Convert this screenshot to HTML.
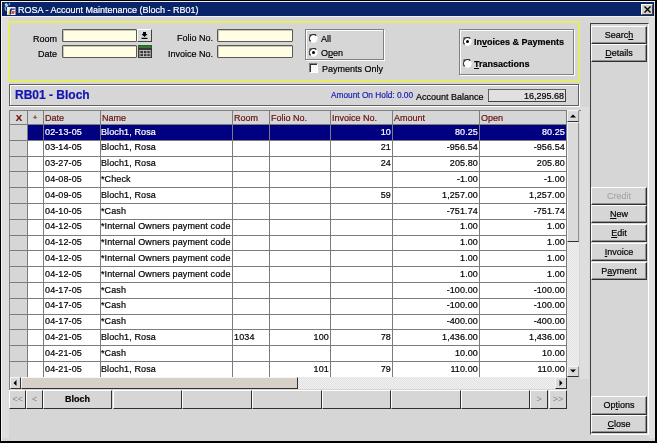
<!DOCTYPE html>
<html><head><meta charset="utf-8">
<style>
*{box-sizing:border-box;margin:0;padding:0}
html,body{width:657px;height:443px;overflow:hidden;background:#d6d6d6}
body{position:relative;font-family:"Liberation Sans",sans-serif;font-size:9px;color:#000}
u{text-decoration:underline;text-underline-offset:1px}
</style></head><body>
<div style="position:absolute;left:0;top:0;width:657px;height:443px;background:#d6d6d6;border:1px solid #000;border-right-width:2px;border-bottom-width:2px"></div>
<div style="position:absolute;left:1px;top:1px;width:654px;height:440px;border-top:1px solid #f4f4f4;border-left:1px solid #f4f4f4"></div>
<div style="position:absolute;left:2px;top:17px;width:6.7px;height:421px;background:#dedede"></div>
<div style="position:absolute;left:580.4px;top:107px;width:8.6px;height:272px;background:#dedede"></div>
<div style="position:absolute;left:649px;top:17px;width:5.5px;height:421px;background:#e0e0e0"></div>
<div style="position:absolute;left:2px;top:2px;width:652px;height:13.5px;background:#0a246a"></div>
<div style="position:absolute;left:1px;top:15.5px;width:654px;height:1px;background:#f0f0f0"></div>
<svg style="position:absolute;left:2px;top:2px" width="15" height="14" viewBox="0 0 15 14">
<path d="M2.5 2 L4.5 1 L6.5 3.5 L4 5.5Z" fill="#a8d0f0"/><circle cx="7.5" cy="2" r="0.9" fill="#80a8e8"/><path d="M2.5 5 L3.5 4.5 L4.5 9 L3 8.5Z" fill="#98c098"/>
<rect x="5" y="5" width="8.5" height="8" fill="#f0f0f0"/>
<path d="M5.5 12.5 L8 7.5 L9.5 8 L7 13Z" fill="#e8e040"/>
<path d="M8 7 L10 6 L9 12.5 L7.5 12.5Z" fill="#182868"/>
<path d="M10 6.5 L13 6.5 L12.5 8 L9.8 8Z" fill="#3048b0"/><path d="M10 9 L13 9 L12 12 L9.5 12Z" fill="#e04858"/>
</svg>
<div style="position:absolute;left:18px;top:4.6px;font-size:9px;line-height:10px;white-space:nowrap;will-change:transform;-webkit-text-stroke:0.2px currentColor;color:#fff">ROSA - Account Maintenance (Bloch - RB01)</div>
<div style="position:absolute;left:640.5px;top:4px;width:12px;height:10.5px;background:#d4d0c8;border-top:1px solid #fff;border-left:1px solid #fff;border-right:1px solid #404040;border-bottom:1px solid #404040"></div>
<svg style="position:absolute;left:643.5px;top:5.5px" width="7" height="7" viewBox="0 0 7 7"><path d="M0.5 0.5 L6.5 6.5 M6.5 0.5 L0.5 6.5" stroke="#000" stroke-width="1.4"/></svg>
<div style="position:absolute;left:8px;top:20.5px;width:572px;height:61.5px;border:2.5px solid #e8ec64"></div>
<div style="position:absolute;left:-63px;width:120px;text-align:right;top:33.5px;font-size:9px;line-height:10px;white-space:nowrap;will-change:transform;-webkit-text-stroke:0.2px currentColor;">Room</div>
<div style="position:absolute;left:-63px;width:120px;text-align:right;top:49.3px;font-size:9px;line-height:10px;white-space:nowrap;will-change:transform;-webkit-text-stroke:0.2px currentColor;">Date</div>
<div style="position:absolute;left:61.7px;top:29px;width:75.5px;height:13.2px;background:#fffde2;border:1px solid #585858;border-radius:1px;box-shadow:inset 1px 1px 0 #c8c8b0"></div>
<div style="position:absolute;left:61.7px;top:45px;width:75.5px;height:13.2px;background:#fffde2;border:1px solid #585858;border-radius:1px;box-shadow:inset 1px 1px 0 #c8c8b0"></div>
<div style="position:absolute;left:137px;top:29px;width:15px;height:13px;background:#dadada;border-top:1px solid #fff;border-left:1px solid #fff;border-right:1px solid #404040;border-bottom:1px solid #404040"></div>
<svg style="position:absolute;left:141px;top:32px" width="7" height="7" viewBox="0 0 7 7"><path d="M2 0 H5 V2 H6.5 L3.5 5 L0.5 2 H2Z" fill="#000"/><rect x="0.5" y="5.8" width="6" height="1.2" fill="#000"/></svg>
<svg style="position:absolute;left:138px;top:45px" width="14" height="13" viewBox="0 0 14 13">
<rect x="0" y="0" width="14" height="13" fill="#383838"/><rect x="0.5" y="0.5" width="13" height="2.5" fill="#2f7a2f"/>
<g fill="#d0d0d0"><rect x="1.5" y="5" width="11" height="0.8"/><rect x="1.5" y="8.3" width="11" height="0.8"/><rect x="1.5" y="11.2" width="11" height="0.8"/>
<rect x="1.5" y="5" width="0.8" height="7"/><rect x="5" y="5" width="0.8" height="7"/><rect x="8.5" y="5" width="0.8" height="7"/><rect x="11.7" y="5" width="0.8" height="7"/></g>
</svg>
<div style="position:absolute;left:93px;width:120px;text-align:right;top:33.4px;font-size:9px;line-height:10px;white-space:nowrap;will-change:transform;-webkit-text-stroke:0.2px currentColor;">Folio No.</div>
<div style="position:absolute;left:93px;width:120px;text-align:right;top:49.4px;font-size:9px;line-height:10px;white-space:nowrap;will-change:transform;-webkit-text-stroke:0.2px currentColor;">Invoice No.</div>
<div style="position:absolute;left:217.1px;top:29px;width:75.5px;height:13.2px;background:#fffde2;border:1px solid #585858;border-radius:1px;box-shadow:inset 1px 1px 0 #c8c8b0"></div>
<div style="position:absolute;left:217.1px;top:45px;width:75.5px;height:13.2px;background:#fffde2;border:1px solid #585858;border-radius:1px;box-shadow:inset 1px 1px 0 #c8c8b0"></div>
<div style="position:absolute;left:304.7px;top:28.6px;width:79.5px;height:31.5px;border:1px solid #808080;box-shadow:1px 1px 0 #fff, inset 1px 1px 0 #fff"></div>
<svg style="position:absolute;left:308.8px;top:33.6px" width="9" height="9" viewBox="0 0 12 12">
<circle cx="6" cy="6" r="5.5" fill="#fff"/>
<path d="M1.2 9.5 A5.5 5.5 0 0 1 9.5 1.2" stroke="#707070" stroke-width="1.4" fill="none"/>
<path d="M2.3 9.7 A4.4 4.4 0 0 1 9.7 2.3" stroke="#202020" stroke-width="1.4" fill="none"/>
</svg>
<div style="position:absolute;left:321.1px;top:34.4px;font-size:9px;line-height:10px;white-space:nowrap;will-change:transform;-webkit-text-stroke:0.2px currentColor;">All</div>
<svg style="position:absolute;left:308.8px;top:47.7px" width="9" height="9" viewBox="0 0 12 12">
<circle cx="6" cy="6" r="5.5" fill="#fff"/>
<path d="M1.2 9.5 A5.5 5.5 0 0 1 9.5 1.2" stroke="#707070" stroke-width="1.4" fill="none"/>
<path d="M2.3 9.7 A4.4 4.4 0 0 1 9.7 2.3" stroke="#202020" stroke-width="1.4" fill="none"/>
<circle cx="6" cy="6" r="2" fill="#000"/></svg>
<div style="position:absolute;left:321.1px;top:47.9px;font-size:9px;line-height:10px;white-space:nowrap;will-change:transform;-webkit-text-stroke:0.2px currentColor;">O<u>p</u>en</div>
<div style="position:absolute;left:308.8px;top:63px;width:9.5px;height:9.5px;background:#f8f8f8;border-top:1px solid #808080;border-left:1px solid #808080;border-right:1px solid #fff;border-bottom:1px solid #fff;box-shadow:inset 1px 1px 0 #303030"></div>
<div style="position:absolute;left:322px;top:64.3px;font-size:9px;line-height:10px;white-space:nowrap;will-change:transform;-webkit-text-stroke:0.2px currentColor;">Payments Only</div>
<div style="position:absolute;left:459.1px;top:28.8px;width:114.5px;height:46.3px;border:1px solid #808080;box-shadow:1px 1px 0 #fff, inset 1px 1px 0 #fff"></div>
<svg style="position:absolute;left:463px;top:37px" width="9" height="9" viewBox="0 0 12 12">
<circle cx="6" cy="6" r="5.5" fill="#fff"/>
<path d="M1.2 9.5 A5.5 5.5 0 0 1 9.5 1.2" stroke="#707070" stroke-width="1.4" fill="none"/>
<path d="M2.3 9.7 A4.4 4.4 0 0 1 9.7 2.3" stroke="#202020" stroke-width="1.4" fill="none"/>
<circle cx="6" cy="6" r="2" fill="#000"/></svg>
<div style="position:absolute;left:474.4px;top:37.3px;font-size:9px;line-height:10px;white-space:nowrap;will-change:transform;-webkit-text-stroke:0.2px currentColor;font-weight:bold">In<u>v</u>oices &amp; Payments</div>
<svg style="position:absolute;left:463px;top:58.8px" width="9" height="9" viewBox="0 0 12 12">
<circle cx="6" cy="6" r="5.5" fill="#fff"/>
<path d="M1.2 9.5 A5.5 5.5 0 0 1 9.5 1.2" stroke="#707070" stroke-width="1.4" fill="none"/>
<path d="M2.3 9.7 A4.4 4.4 0 0 1 9.7 2.3" stroke="#202020" stroke-width="1.4" fill="none"/>
</svg>
<div style="position:absolute;left:474.4px;top:58.8px;font-size:9px;line-height:10px;white-space:nowrap;will-change:transform;-webkit-text-stroke:0.2px currentColor;font-weight:bold"><u>T</u>ransactions</div>
<div style="position:absolute;left:590px;top:23px;width:58.6px;height:412px;border-top:1px solid #404040;border-left:1px solid #404040;border-right:1px solid #fff;border-bottom:1px solid #fff"></div>
<div style="position:absolute;left:591.3px;top:25.7px;width:55.5px;height:18.6px;background:#d6d6d6;border-top:1px solid #fff;border-left:1px solid #fff;border-right:1px solid #303030;border-bottom:1px solid #303030;box-shadow:inset -1px -1px 0 #909090"></div>
<div style="position:absolute;left:579.05px;width:80px;text-align:center;top:30px;font-size:9px;line-height:10px;white-space:nowrap;will-change:transform;-webkit-text-stroke:0.2px currentColor;">Searc<u>h</u></div>
<div style="position:absolute;left:591.3px;top:43.9px;width:55.5px;height:18.6px;background:#d6d6d6;border-top:1px solid #fff;border-left:1px solid #fff;border-right:1px solid #303030;border-bottom:1px solid #303030;box-shadow:inset -1px -1px 0 #909090"></div>
<div style="position:absolute;left:579.05px;width:80px;text-align:center;top:48px;font-size:9px;line-height:10px;white-space:nowrap;will-change:transform;-webkit-text-stroke:0.2px currentColor;"><u>D</u>etails</div>
<div style="position:absolute;left:591.3px;top:186.7px;width:55.5px;height:18.6px;background:#d6d6d6;border-top:1px solid #fff;border-left:1px solid #fff;border-right:1px solid #303030;border-bottom:1px solid #303030;box-shadow:inset -1px -1px 0 #909090"></div>
<div style="position:absolute;left:579.05px;width:80px;text-align:center;top:191px;font-size:9px;line-height:10px;white-space:nowrap;will-change:transform;-webkit-text-stroke:0.2px currentColor;color:#a8a8a8">Credit</div>
<div style="position:absolute;left:591.3px;top:204.9px;width:55.5px;height:18.6px;background:#d6d6d6;border-top:1px solid #fff;border-left:1px solid #fff;border-right:1px solid #303030;border-bottom:1px solid #303030;box-shadow:inset -1px -1px 0 #909090"></div>
<div style="position:absolute;left:579.05px;width:80px;text-align:center;top:209px;font-size:9px;line-height:10px;white-space:nowrap;will-change:transform;-webkit-text-stroke:0.2px currentColor;"><u>N</u>ew</div>
<div style="position:absolute;left:591.3px;top:223.8px;width:55.5px;height:18.6px;background:#d6d6d6;border-top:1px solid #fff;border-left:1px solid #fff;border-right:1px solid #303030;border-bottom:1px solid #303030;box-shadow:inset -1px -1px 0 #909090"></div>
<div style="position:absolute;left:579.05px;width:80px;text-align:center;top:228px;font-size:9px;line-height:10px;white-space:nowrap;will-change:transform;-webkit-text-stroke:0.2px currentColor;"><u>E</u>dit</div>
<div style="position:absolute;left:591.3px;top:242.5px;width:55.5px;height:18.6px;background:#d6d6d6;border-top:1px solid #fff;border-left:1px solid #fff;border-right:1px solid #303030;border-bottom:1px solid #303030;box-shadow:inset -1px -1px 0 #909090"></div>
<div style="position:absolute;left:579.05px;width:80px;text-align:center;top:247px;font-size:9px;line-height:10px;white-space:nowrap;will-change:transform;-webkit-text-stroke:0.2px currentColor;"><u>I</u>nvoice</div>
<div style="position:absolute;left:591.3px;top:261.5px;width:55.5px;height:18.6px;background:#d6d6d6;border-top:1px solid #fff;border-left:1px solid #fff;border-right:1px solid #303030;border-bottom:1px solid #303030;box-shadow:inset -1px -1px 0 #909090"></div>
<div style="position:absolute;left:579.05px;width:80px;text-align:center;top:266px;font-size:9px;line-height:10px;white-space:nowrap;will-change:transform;-webkit-text-stroke:0.2px currentColor;">P<u>a</u>yment</div>
<div style="position:absolute;left:591.3px;top:396px;width:55.5px;height:18.6px;background:#d6d6d6;border-top:1px solid #fff;border-left:1px solid #fff;border-right:1px solid #303030;border-bottom:1px solid #303030;box-shadow:inset -1px -1px 0 #909090"></div>
<div style="position:absolute;left:579.05px;width:80px;text-align:center;top:400px;font-size:9px;line-height:10px;white-space:nowrap;will-change:transform;-webkit-text-stroke:0.2px currentColor;">Op<u>t</u>ions</div>
<div style="position:absolute;left:591.3px;top:414.8px;width:55.5px;height:18.6px;background:#d6d6d6;border-top:1px solid #fff;border-left:1px solid #fff;border-right:1px solid #303030;border-bottom:1px solid #303030;box-shadow:inset -1px -1px 0 #909090"></div>
<div style="position:absolute;left:579.05px;width:80px;text-align:center;top:419px;font-size:9px;line-height:10px;white-space:nowrap;will-change:transform;-webkit-text-stroke:0.2px currentColor;"><u>C</u>lose</div>
<div style="position:absolute;left:9px;top:84.2px;width:569.5px;height:21.8px;border:1px solid #606060;box-shadow:1px 1px 0 #fff, inset 1px 1px 0 #fff"></div>
<div style="position:absolute;left:14.8px;top:89.8px;font-size:12px;line-height:10px;white-space:nowrap;will-change:transform;-webkit-text-stroke:0.2px currentColor;font-weight:bold;color:#1414b4">RB01 - Bloch</div>
<div style="position:absolute;left:331px;top:90px;font-size:8px;line-height:10px;white-space:nowrap;will-change:transform;-webkit-text-stroke:0.2px currentColor;color:#2020b4;font-size:8.3px">Amount On Hold: 0.00</div>
<div style="position:absolute;left:416.3px;top:91.5px;font-size:9px;line-height:10px;white-space:nowrap;will-change:transform;-webkit-text-stroke:0.2px currentColor;">Account Balance</div>
<div style="position:absolute;left:488px;top:89px;width:78px;height:13px;background:#e0e0e0;border:1px solid #404040;border-top-color:#606060;border-left-color:#606060"></div>
<div style="position:absolute;left:444px;width:120px;text-align:right;top:90.5px;font-size:9px;line-height:10px;white-space:nowrap;will-change:transform;-webkit-text-stroke:0.2px currentColor;">16,295.68</div>
<div style="position:absolute;left:8.7px;top:109.9px;width:572px;height:280.5px;border-top:1px solid #808080;border-left:1px solid #808080"></div>
<div style="position:absolute;left:9.7px;top:110.4px;width:556.8px;height:266.9px;background:#fff"></div>
<div style="position:absolute;left:9.7px;top:110.4px;width:556.8px;height:14.099999999999994px;background:#d6d6d6"></div>
<div style="position:absolute;left:9.7px;top:124.5px;width:17.6px;height:252.8px;background:#d6d6d6"></div>
<div style="position:absolute;left:27.3px;top:124.5px;width:539.2px;height:15.8px;background:#000080"></div>
<div style="position:absolute;left:8.5px;width:20px;text-align:center;top:113.4px;font-size:9px;line-height:10px;white-space:nowrap;will-change:transform;-webkit-text-stroke:0.2px currentColor;color:#681010;font-weight:bold;font-size:9.5px;line-height:10px">X</div>
<div style="position:absolute;left:27.299999999999997px;width:16px;text-align:center;top:113.4px;font-size:9px;line-height:10px;white-space:nowrap;will-change:transform;-webkit-text-stroke:0.2px currentColor;color:#681010;font-size:8px">+</div>
<div style="position:absolute;left:44.8px;top:113.4px;font-size:9px;line-height:10px;white-space:nowrap;will-change:transform;-webkit-text-stroke:0.2px currentColor;color:#681010">Date</div>
<div style="position:absolute;left:101.5px;top:113.4px;font-size:9px;line-height:10px;white-space:nowrap;will-change:transform;-webkit-text-stroke:0.2px currentColor;color:#681010">Name</div>
<div style="position:absolute;left:233.8px;top:113.4px;font-size:9px;line-height:10px;white-space:nowrap;will-change:transform;-webkit-text-stroke:0.2px currentColor;color:#681010">Room</div>
<div style="position:absolute;left:270.9px;top:113.4px;font-size:9px;line-height:10px;white-space:nowrap;will-change:transform;-webkit-text-stroke:0.2px currentColor;color:#681010">Folio No.</div>
<div style="position:absolute;left:332.4px;top:113.4px;font-size:9px;line-height:10px;white-space:nowrap;will-change:transform;-webkit-text-stroke:0.2px currentColor;color:#681010">Invoice No.</div>
<div style="position:absolute;left:393.7px;top:113.4px;font-size:9px;line-height:10px;white-space:nowrap;will-change:transform;-webkit-text-stroke:0.2px currentColor;color:#681010">Amount</div>
<div style="position:absolute;left:481.0px;top:113.4px;font-size:9px;line-height:10px;white-space:nowrap;will-change:transform;-webkit-text-stroke:0.2px currentColor;color:#681010">Open</div>
<div style="position:absolute;left:44.5px;top:126.5px;font-size:9px;line-height:10px;white-space:nowrap;will-change:transform;-webkit-text-stroke:0.2px currentColor;letter-spacing:0.12px;color:#fff">02-13-05</div>
<div style="position:absolute;left:101.2px;top:126.5px;font-size:9px;line-height:10px;white-space:nowrap;will-change:transform;-webkit-text-stroke:0.2px currentColor;letter-spacing:0.12px;color:#fff">Bloch1, Rosa</div>
<div style="position:absolute;left:270.7px;width:120px;text-align:right;top:126.5px;font-size:9px;line-height:10px;white-space:nowrap;will-change:transform;-webkit-text-stroke:0.2px currentColor;letter-spacing:0.12px;color:#fff">10</div>
<div style="position:absolute;left:358.0px;width:120px;text-align:right;top:126.5px;font-size:9px;line-height:10px;white-space:nowrap;will-change:transform;-webkit-text-stroke:0.2px currentColor;letter-spacing:0.12px;color:#fff">80.25</div>
<div style="position:absolute;left:445.0px;width:120px;text-align:right;top:126.5px;font-size:9px;line-height:10px;white-space:nowrap;will-change:transform;-webkit-text-stroke:0.2px currentColor;letter-spacing:0.12px;color:#fff">80.25</div>
<div style="position:absolute;left:44.5px;top:142.3px;font-size:9px;line-height:10px;white-space:nowrap;will-change:transform;-webkit-text-stroke:0.2px currentColor;letter-spacing:0.12px;">03-14-05</div>
<div style="position:absolute;left:101.2px;top:142.3px;font-size:9px;line-height:10px;white-space:nowrap;will-change:transform;-webkit-text-stroke:0.2px currentColor;letter-spacing:0.12px;">Bloch1, Rosa</div>
<div style="position:absolute;left:270.7px;width:120px;text-align:right;top:142.3px;font-size:9px;line-height:10px;white-space:nowrap;will-change:transform;-webkit-text-stroke:0.2px currentColor;letter-spacing:0.12px;">21</div>
<div style="position:absolute;left:358.0px;width:120px;text-align:right;top:142.3px;font-size:9px;line-height:10px;white-space:nowrap;will-change:transform;-webkit-text-stroke:0.2px currentColor;letter-spacing:0.12px;">-956.54</div>
<div style="position:absolute;left:445.0px;width:120px;text-align:right;top:142.3px;font-size:9px;line-height:10px;white-space:nowrap;will-change:transform;-webkit-text-stroke:0.2px currentColor;letter-spacing:0.12px;">-956.54</div>
<div style="position:absolute;left:44.5px;top:158.1px;font-size:9px;line-height:10px;white-space:nowrap;will-change:transform;-webkit-text-stroke:0.2px currentColor;letter-spacing:0.12px;">03-27-05</div>
<div style="position:absolute;left:101.2px;top:158.1px;font-size:9px;line-height:10px;white-space:nowrap;will-change:transform;-webkit-text-stroke:0.2px currentColor;letter-spacing:0.12px;">Bloch1, Rosa</div>
<div style="position:absolute;left:270.7px;width:120px;text-align:right;top:158.1px;font-size:9px;line-height:10px;white-space:nowrap;will-change:transform;-webkit-text-stroke:0.2px currentColor;letter-spacing:0.12px;">24</div>
<div style="position:absolute;left:358.0px;width:120px;text-align:right;top:158.1px;font-size:9px;line-height:10px;white-space:nowrap;will-change:transform;-webkit-text-stroke:0.2px currentColor;letter-spacing:0.12px;">205.80</div>
<div style="position:absolute;left:445.0px;width:120px;text-align:right;top:158.1px;font-size:9px;line-height:10px;white-space:nowrap;will-change:transform;-webkit-text-stroke:0.2px currentColor;letter-spacing:0.12px;">205.80</div>
<div style="position:absolute;left:44.5px;top:173.9px;font-size:9px;line-height:10px;white-space:nowrap;will-change:transform;-webkit-text-stroke:0.2px currentColor;letter-spacing:0.12px;">04-08-05</div>
<div style="position:absolute;left:101.2px;top:173.9px;font-size:9px;line-height:10px;white-space:nowrap;will-change:transform;-webkit-text-stroke:0.2px currentColor;letter-spacing:0.12px;">*Check</div>
<div style="position:absolute;left:358.0px;width:120px;text-align:right;top:173.9px;font-size:9px;line-height:10px;white-space:nowrap;will-change:transform;-webkit-text-stroke:0.2px currentColor;letter-spacing:0.12px;">-1.00</div>
<div style="position:absolute;left:445.0px;width:120px;text-align:right;top:173.9px;font-size:9px;line-height:10px;white-space:nowrap;will-change:transform;-webkit-text-stroke:0.2px currentColor;letter-spacing:0.12px;">-1.00</div>
<div style="position:absolute;left:44.5px;top:189.7px;font-size:9px;line-height:10px;white-space:nowrap;will-change:transform;-webkit-text-stroke:0.2px currentColor;letter-spacing:0.12px;">04-09-05</div>
<div style="position:absolute;left:101.2px;top:189.7px;font-size:9px;line-height:10px;white-space:nowrap;will-change:transform;-webkit-text-stroke:0.2px currentColor;letter-spacing:0.12px;">Bloch1, Rosa</div>
<div style="position:absolute;left:270.7px;width:120px;text-align:right;top:189.7px;font-size:9px;line-height:10px;white-space:nowrap;will-change:transform;-webkit-text-stroke:0.2px currentColor;letter-spacing:0.12px;">59</div>
<div style="position:absolute;left:358.0px;width:120px;text-align:right;top:189.7px;font-size:9px;line-height:10px;white-space:nowrap;will-change:transform;-webkit-text-stroke:0.2px currentColor;letter-spacing:0.12px;">1,257.00</div>
<div style="position:absolute;left:445.0px;width:120px;text-align:right;top:189.7px;font-size:9px;line-height:10px;white-space:nowrap;will-change:transform;-webkit-text-stroke:0.2px currentColor;letter-spacing:0.12px;">1,257.00</div>
<div style="position:absolute;left:44.5px;top:205.5px;font-size:9px;line-height:10px;white-space:nowrap;will-change:transform;-webkit-text-stroke:0.2px currentColor;letter-spacing:0.12px;">04-10-05</div>
<div style="position:absolute;left:101.2px;top:205.5px;font-size:9px;line-height:10px;white-space:nowrap;will-change:transform;-webkit-text-stroke:0.2px currentColor;letter-spacing:0.12px;">*Cash</div>
<div style="position:absolute;left:358.0px;width:120px;text-align:right;top:205.5px;font-size:9px;line-height:10px;white-space:nowrap;will-change:transform;-webkit-text-stroke:0.2px currentColor;letter-spacing:0.12px;">-751.74</div>
<div style="position:absolute;left:445.0px;width:120px;text-align:right;top:205.5px;font-size:9px;line-height:10px;white-space:nowrap;will-change:transform;-webkit-text-stroke:0.2px currentColor;letter-spacing:0.12px;">-751.74</div>
<div style="position:absolute;left:44.5px;top:221.3px;font-size:9px;line-height:10px;white-space:nowrap;will-change:transform;-webkit-text-stroke:0.2px currentColor;letter-spacing:0.12px;">04-12-05</div>
<div style="position:absolute;left:101.2px;top:221.3px;font-size:9px;line-height:10px;white-space:nowrap;will-change:transform;-webkit-text-stroke:0.2px currentColor;letter-spacing:0.12px;">*Internal Owners payment code</div>
<div style="position:absolute;left:358.0px;width:120px;text-align:right;top:221.3px;font-size:9px;line-height:10px;white-space:nowrap;will-change:transform;-webkit-text-stroke:0.2px currentColor;letter-spacing:0.12px;">1.00</div>
<div style="position:absolute;left:445.0px;width:120px;text-align:right;top:221.3px;font-size:9px;line-height:10px;white-space:nowrap;will-change:transform;-webkit-text-stroke:0.2px currentColor;letter-spacing:0.12px;">1.00</div>
<div style="position:absolute;left:44.5px;top:237.10000000000002px;font-size:9px;line-height:10px;white-space:nowrap;will-change:transform;-webkit-text-stroke:0.2px currentColor;letter-spacing:0.12px;">04-12-05</div>
<div style="position:absolute;left:101.2px;top:237.10000000000002px;font-size:9px;line-height:10px;white-space:nowrap;will-change:transform;-webkit-text-stroke:0.2px currentColor;letter-spacing:0.12px;">*Internal Owners payment code</div>
<div style="position:absolute;left:358.0px;width:120px;text-align:right;top:237.10000000000002px;font-size:9px;line-height:10px;white-space:nowrap;will-change:transform;-webkit-text-stroke:0.2px currentColor;letter-spacing:0.12px;">1.00</div>
<div style="position:absolute;left:445.0px;width:120px;text-align:right;top:237.10000000000002px;font-size:9px;line-height:10px;white-space:nowrap;will-change:transform;-webkit-text-stroke:0.2px currentColor;letter-spacing:0.12px;">1.00</div>
<div style="position:absolute;left:44.5px;top:252.9px;font-size:9px;line-height:10px;white-space:nowrap;will-change:transform;-webkit-text-stroke:0.2px currentColor;letter-spacing:0.12px;">04-12-05</div>
<div style="position:absolute;left:101.2px;top:252.9px;font-size:9px;line-height:10px;white-space:nowrap;will-change:transform;-webkit-text-stroke:0.2px currentColor;letter-spacing:0.12px;">*Internal Owners payment code</div>
<div style="position:absolute;left:358.0px;width:120px;text-align:right;top:252.9px;font-size:9px;line-height:10px;white-space:nowrap;will-change:transform;-webkit-text-stroke:0.2px currentColor;letter-spacing:0.12px;">1.00</div>
<div style="position:absolute;left:445.0px;width:120px;text-align:right;top:252.9px;font-size:9px;line-height:10px;white-space:nowrap;will-change:transform;-webkit-text-stroke:0.2px currentColor;letter-spacing:0.12px;">1.00</div>
<div style="position:absolute;left:44.5px;top:268.70000000000005px;font-size:9px;line-height:10px;white-space:nowrap;will-change:transform;-webkit-text-stroke:0.2px currentColor;letter-spacing:0.12px;">04-12-05</div>
<div style="position:absolute;left:101.2px;top:268.70000000000005px;font-size:9px;line-height:10px;white-space:nowrap;will-change:transform;-webkit-text-stroke:0.2px currentColor;letter-spacing:0.12px;">*Internal Owners payment code</div>
<div style="position:absolute;left:358.0px;width:120px;text-align:right;top:268.70000000000005px;font-size:9px;line-height:10px;white-space:nowrap;will-change:transform;-webkit-text-stroke:0.2px currentColor;letter-spacing:0.12px;">1.00</div>
<div style="position:absolute;left:445.0px;width:120px;text-align:right;top:268.70000000000005px;font-size:9px;line-height:10px;white-space:nowrap;will-change:transform;-webkit-text-stroke:0.2px currentColor;letter-spacing:0.12px;">1.00</div>
<div style="position:absolute;left:44.5px;top:284.5px;font-size:9px;line-height:10px;white-space:nowrap;will-change:transform;-webkit-text-stroke:0.2px currentColor;letter-spacing:0.12px;">04-17-05</div>
<div style="position:absolute;left:101.2px;top:284.5px;font-size:9px;line-height:10px;white-space:nowrap;will-change:transform;-webkit-text-stroke:0.2px currentColor;letter-spacing:0.12px;">*Cash</div>
<div style="position:absolute;left:358.0px;width:120px;text-align:right;top:284.5px;font-size:9px;line-height:10px;white-space:nowrap;will-change:transform;-webkit-text-stroke:0.2px currentColor;letter-spacing:0.12px;">-100.00</div>
<div style="position:absolute;left:445.0px;width:120px;text-align:right;top:284.5px;font-size:9px;line-height:10px;white-space:nowrap;will-change:transform;-webkit-text-stroke:0.2px currentColor;letter-spacing:0.12px;">-100.00</div>
<div style="position:absolute;left:44.5px;top:300.3px;font-size:9px;line-height:10px;white-space:nowrap;will-change:transform;-webkit-text-stroke:0.2px currentColor;letter-spacing:0.12px;">04-17-05</div>
<div style="position:absolute;left:101.2px;top:300.3px;font-size:9px;line-height:10px;white-space:nowrap;will-change:transform;-webkit-text-stroke:0.2px currentColor;letter-spacing:0.12px;">*Cash</div>
<div style="position:absolute;left:358.0px;width:120px;text-align:right;top:300.3px;font-size:9px;line-height:10px;white-space:nowrap;will-change:transform;-webkit-text-stroke:0.2px currentColor;letter-spacing:0.12px;">-100.00</div>
<div style="position:absolute;left:445.0px;width:120px;text-align:right;top:300.3px;font-size:9px;line-height:10px;white-space:nowrap;will-change:transform;-webkit-text-stroke:0.2px currentColor;letter-spacing:0.12px;">-100.00</div>
<div style="position:absolute;left:44.5px;top:316.1px;font-size:9px;line-height:10px;white-space:nowrap;will-change:transform;-webkit-text-stroke:0.2px currentColor;letter-spacing:0.12px;">04-17-05</div>
<div style="position:absolute;left:101.2px;top:316.1px;font-size:9px;line-height:10px;white-space:nowrap;will-change:transform;-webkit-text-stroke:0.2px currentColor;letter-spacing:0.12px;">*Cash</div>
<div style="position:absolute;left:358.0px;width:120px;text-align:right;top:316.1px;font-size:9px;line-height:10px;white-space:nowrap;will-change:transform;-webkit-text-stroke:0.2px currentColor;letter-spacing:0.12px;">-400.00</div>
<div style="position:absolute;left:445.0px;width:120px;text-align:right;top:316.1px;font-size:9px;line-height:10px;white-space:nowrap;will-change:transform;-webkit-text-stroke:0.2px currentColor;letter-spacing:0.12px;">-400.00</div>
<div style="position:absolute;left:44.5px;top:331.9px;font-size:9px;line-height:10px;white-space:nowrap;will-change:transform;-webkit-text-stroke:0.2px currentColor;letter-spacing:0.12px;">04-21-05</div>
<div style="position:absolute;left:101.2px;top:331.9px;font-size:9px;line-height:10px;white-space:nowrap;will-change:transform;-webkit-text-stroke:0.2px currentColor;letter-spacing:0.12px;">Bloch1, Rosa</div>
<div style="position:absolute;left:233.5px;top:331.9px;font-size:9px;line-height:10px;white-space:nowrap;will-change:transform;-webkit-text-stroke:0.2px currentColor;letter-spacing:0.12px;">1034</div>
<div style="position:absolute;left:209.39999999999998px;width:120px;text-align:right;top:331.9px;font-size:9px;line-height:10px;white-space:nowrap;will-change:transform;-webkit-text-stroke:0.2px currentColor;letter-spacing:0.12px;">100</div>
<div style="position:absolute;left:270.7px;width:120px;text-align:right;top:331.9px;font-size:9px;line-height:10px;white-space:nowrap;will-change:transform;-webkit-text-stroke:0.2px currentColor;letter-spacing:0.12px;">78</div>
<div style="position:absolute;left:358.0px;width:120px;text-align:right;top:331.9px;font-size:9px;line-height:10px;white-space:nowrap;will-change:transform;-webkit-text-stroke:0.2px currentColor;letter-spacing:0.12px;">1,436.00</div>
<div style="position:absolute;left:445.0px;width:120px;text-align:right;top:331.9px;font-size:9px;line-height:10px;white-space:nowrap;will-change:transform;-webkit-text-stroke:0.2px currentColor;letter-spacing:0.12px;">1,436.00</div>
<div style="position:absolute;left:44.5px;top:347.70000000000005px;font-size:9px;line-height:10px;white-space:nowrap;will-change:transform;-webkit-text-stroke:0.2px currentColor;letter-spacing:0.12px;">04-21-05</div>
<div style="position:absolute;left:101.2px;top:347.70000000000005px;font-size:9px;line-height:10px;white-space:nowrap;will-change:transform;-webkit-text-stroke:0.2px currentColor;letter-spacing:0.12px;">*Cash</div>
<div style="position:absolute;left:358.0px;width:120px;text-align:right;top:347.70000000000005px;font-size:9px;line-height:10px;white-space:nowrap;will-change:transform;-webkit-text-stroke:0.2px currentColor;letter-spacing:0.12px;">10.00</div>
<div style="position:absolute;left:445.0px;width:120px;text-align:right;top:347.70000000000005px;font-size:9px;line-height:10px;white-space:nowrap;will-change:transform;-webkit-text-stroke:0.2px currentColor;letter-spacing:0.12px;">10.00</div>
<div style="position:absolute;left:44.5px;top:363.5px;font-size:9px;line-height:10px;white-space:nowrap;will-change:transform;-webkit-text-stroke:0.2px currentColor;letter-spacing:0.12px;">04-21-05</div>
<div style="position:absolute;left:101.2px;top:363.5px;font-size:9px;line-height:10px;white-space:nowrap;will-change:transform;-webkit-text-stroke:0.2px currentColor;letter-spacing:0.12px;">Bloch1, Rosa</div>
<div style="position:absolute;left:209.39999999999998px;width:120px;text-align:right;top:363.5px;font-size:9px;line-height:10px;white-space:nowrap;will-change:transform;-webkit-text-stroke:0.2px currentColor;letter-spacing:0.12px;">101</div>
<div style="position:absolute;left:270.7px;width:120px;text-align:right;top:363.5px;font-size:9px;line-height:10px;white-space:nowrap;will-change:transform;-webkit-text-stroke:0.2px currentColor;letter-spacing:0.12px;">79</div>
<div style="position:absolute;left:358.0px;width:120px;text-align:right;top:363.5px;font-size:9px;line-height:10px;white-space:nowrap;will-change:transform;-webkit-text-stroke:0.2px currentColor;letter-spacing:0.12px;">110.00</div>
<div style="position:absolute;left:445.0px;width:120px;text-align:right;top:363.5px;font-size:9px;line-height:10px;white-space:nowrap;will-change:transform;-webkit-text-stroke:0.2px currentColor;letter-spacing:0.12px;">110.00</div>
<div style="position:absolute;left:26.8px;top:110.4px;width:1px;height:266.9px;background:#7c7c7c"></div>
<div style="position:absolute;left:42.8px;top:110.4px;width:1px;height:266.9px;background:#7c7c7c"></div>
<div style="position:absolute;left:99.5px;top:110.4px;width:1px;height:266.9px;background:#7c7c7c"></div>
<div style="position:absolute;left:231.8px;top:110.4px;width:1px;height:266.9px;background:#7c7c7c"></div>
<div style="position:absolute;left:268.9px;top:110.4px;width:1px;height:266.9px;background:#7c7c7c"></div>
<div style="position:absolute;left:330.4px;top:110.4px;width:1px;height:266.9px;background:#7c7c7c"></div>
<div style="position:absolute;left:391.7px;top:110.4px;width:1px;height:266.9px;background:#7c7c7c"></div>
<div style="position:absolute;left:479.0px;top:110.4px;width:1px;height:266.9px;background:#7c7c7c"></div>
<div style="position:absolute;left:566.0px;top:110.4px;width:1px;height:266.9px;background:#7c7c7c"></div>
<div style="position:absolute;left:8.7px;top:109.9px;width:557.8px;height:1px;background:#808080"></div>
<div style="position:absolute;left:9.7px;top:124.0px;width:556.8px;height:1px;background:#7c7c7c"></div>
<div style="position:absolute;left:9.7px;top:139.8px;width:556.8px;height:1px;background:#7c7c7c"></div>
<div style="position:absolute;left:9.7px;top:155.6px;width:556.8px;height:1px;background:#7c7c7c"></div>
<div style="position:absolute;left:9.7px;top:171.4px;width:556.8px;height:1px;background:#7c7c7c"></div>
<div style="position:absolute;left:9.7px;top:187.2px;width:556.8px;height:1px;background:#7c7c7c"></div>
<div style="position:absolute;left:9.7px;top:203.0px;width:556.8px;height:1px;background:#7c7c7c"></div>
<div style="position:absolute;left:9.7px;top:218.8px;width:556.8px;height:1px;background:#7c7c7c"></div>
<div style="position:absolute;left:9.7px;top:234.60000000000002px;width:556.8px;height:1px;background:#7c7c7c"></div>
<div style="position:absolute;left:9.7px;top:250.4px;width:556.8px;height:1px;background:#7c7c7c"></div>
<div style="position:absolute;left:9.7px;top:266.20000000000005px;width:556.8px;height:1px;background:#7c7c7c"></div>
<div style="position:absolute;left:9.7px;top:282.0px;width:556.8px;height:1px;background:#7c7c7c"></div>
<div style="position:absolute;left:9.7px;top:297.8px;width:556.8px;height:1px;background:#7c7c7c"></div>
<div style="position:absolute;left:9.7px;top:313.6px;width:556.8px;height:1px;background:#7c7c7c"></div>
<div style="position:absolute;left:9.7px;top:329.4px;width:556.8px;height:1px;background:#7c7c7c"></div>
<div style="position:absolute;left:9.7px;top:345.20000000000005px;width:556.8px;height:1px;background:#7c7c7c"></div>
<div style="position:absolute;left:9.7px;top:361.0px;width:556.8px;height:1px;background:#7c7c7c"></div>
<div style="position:absolute;left:9.7px;top:376.8px;width:556.8px;height:1px;background:#7c7c7c"></div>
<div style="position:absolute;left:567.2px;top:110.4px;width:12.2px;height:266.9px;background-color:#f2f2f2;background-image:linear-gradient(45deg,#e0e0e0 25%,transparent 25%,transparent 75%,#e0e0e0 75%),linear-gradient(45deg,#e0e0e0 25%,transparent 25%,transparent 75%,#e0e0e0 75%);background-size:2px 2px;background-position:0 0,1px 1px"></div>
<div style="position:absolute;left:567.2px;top:110.4px;width:12.2px;height:11.5px;background:#dadada;border-top:1px solid #f4f4f4;border-left:1px solid #f4f4f4;border-right:1px solid #909090;border-bottom:1px solid #303030"></div>
<svg style="position:absolute;left:570.2px;top:114.4px" width="6" height="4" viewBox="0 0 6 4"><path d="M0 3.5 L3 0.5 L6 3.5Z" fill="#000"/></svg>
<div style="position:absolute;left:567.2px;top:121.9px;width:12.2px;height:120px;background:#dadada;border-top:1px solid #f4f4f4;border-left:1px solid #f4f4f4;border-right:1px solid #909090;border-bottom:1px solid #303030"></div>
<div style="position:absolute;left:567.2px;top:365.5px;width:12.2px;height:11.8px;background:#dadada;border-top:1px solid #f4f4f4;border-left:1px solid #f4f4f4;border-right:1px solid #909090;border-bottom:1px solid #303030"></div>
<svg style="position:absolute;left:570.2px;top:369.3px" width="6" height="4" viewBox="0 0 6 4"><path d="M0 0.5 L3 3.5 L6 0.5Z" fill="#000"/></svg>
<div style="position:absolute;left:9.7px;top:377.3px;width:556.8px;height:11.5px;background-color:#f2f2f2;background-image:linear-gradient(45deg,#e0e0e0 25%,transparent 25%,transparent 75%,#e0e0e0 75%),linear-gradient(45deg,#e0e0e0 25%,transparent 25%,transparent 75%,#e0e0e0 75%);background-size:2px 2px;background-position:0 0,1px 1px"></div>
<div style="position:absolute;left:9.7px;top:377.3px;width:11px;height:11.5px;background:#dadada;border-top:1px solid #f4f4f4;border-left:1px solid #f4f4f4;border-right:1px solid #303030;border-bottom:1px solid #303030"></div>
<svg style="position:absolute;left:13.2px;top:380.3px" width="4" height="6" viewBox="0 0 4 6"><path d="M3.5 0 L0.5 3 L3.5 6Z" fill="#000"/></svg>
<div style="position:absolute;left:21.0px;top:377.3px;width:276.7px;height:11.5px;background:#d6d0c8;border-top:1px solid #f4f4f4;border-left:1px solid #f4f4f4;border-right:1px solid #303030;border-bottom:1px solid #303030"></div>
<div style="position:absolute;left:555px;top:377.3px;width:11.5px;height:11.5px;background:#dadada;border-top:1px solid #f4f4f4;border-left:1px solid #f4f4f4;border-right:1px solid #303030;border-bottom:1px solid #303030"></div>
<svg style="position:absolute;left:559px;top:380.3px" width="4" height="6" viewBox="0 0 4 6"><path d="M0.5 0 L3.5 3 L0.5 6Z" fill="#000"/></svg>
<div style="position:absolute;left:8.7px;top:389.8px;width:17.3px;height:19.5px;background:#d6d6d6;border-top:1px solid #fff;border-left:1px solid #fff;border-right:1.5px solid #303030;border-bottom:1.5px solid #303030"></div>
<div style="position:absolute;left:8.700000000000001px;width:17.3px;text-align:center;top:394.0px;font-size:9px;line-height:10px;white-space:nowrap;will-change:transform;-webkit-text-stroke:0.2px currentColor;color:#8c8c8c;-webkit-text-stroke:0">&lt;&lt;</div>
<div style="position:absolute;left:26px;top:389.8px;width:17.4px;height:19.5px;background:#d6d6d6;border-top:1px solid #fff;border-left:1px solid #fff;border-right:1.5px solid #303030;border-bottom:1.5px solid #303030"></div>
<div style="position:absolute;left:26.000000000000004px;width:17.4px;text-align:center;top:394.0px;font-size:9px;line-height:10px;white-space:nowrap;will-change:transform;-webkit-text-stroke:0.2px currentColor;color:#8c8c8c;-webkit-text-stroke:0">&lt;</div>
<div style="position:absolute;left:43.4px;top:389.8px;width:69.1px;height:19.5px;background:#d6d6d6;border-top:1px solid #fff;border-left:1px solid #fff;border-right:1.5px solid #303030;border-bottom:1.5px solid #303030"></div>
<div style="position:absolute;left:43.400000000000006px;width:69.1px;text-align:center;top:394.0px;font-size:9px;line-height:10px;white-space:nowrap;will-change:transform;-webkit-text-stroke:0.2px currentColor;font-weight:bold">Bloch</div>
<div style="position:absolute;left:112.5px;top:389.8px;width:69.30000000000001px;height:19.5px;background:#d6d6d6;border-top:1px solid #fff;border-left:1px solid #fff;border-right:1.5px solid #303030;border-bottom:1.5px solid #303030"></div>
<div style="position:absolute;left:181.8px;top:389.8px;width:69.79999999999998px;height:19.5px;background:#d6d6d6;border-top:1px solid #fff;border-left:1px solid #fff;border-right:1.5px solid #303030;border-bottom:1.5px solid #303030"></div>
<div style="position:absolute;left:251.6px;top:389.8px;width:70.00000000000003px;height:19.5px;background:#d6d6d6;border-top:1px solid #fff;border-left:1px solid #fff;border-right:1.5px solid #303030;border-bottom:1.5px solid #303030"></div>
<div style="position:absolute;left:321.6px;top:389.8px;width:69.59999999999997px;height:19.5px;background:#d6d6d6;border-top:1px solid #fff;border-left:1px solid #fff;border-right:1.5px solid #303030;border-bottom:1.5px solid #303030"></div>
<div style="position:absolute;left:391.2px;top:389.8px;width:69.40000000000003px;height:19.5px;background:#d6d6d6;border-top:1px solid #fff;border-left:1px solid #fff;border-right:1.5px solid #303030;border-bottom:1.5px solid #303030"></div>
<div style="position:absolute;left:460.6px;top:389.8px;width:69.69999999999993px;height:19.5px;background:#d6d6d6;border-top:1px solid #fff;border-left:1px solid #fff;border-right:1.5px solid #303030;border-bottom:1.5px solid #303030"></div>
<div style="position:absolute;left:530.3px;top:389.8px;width:18.200000000000045px;height:19.5px;background:#d6d6d6;border-top:1px solid #fff;border-left:1px solid #fff;border-right:1.5px solid #303030;border-bottom:1.5px solid #303030"></div>
<div style="position:absolute;left:530.3px;width:18.200000000000045px;text-align:center;top:394.0px;font-size:9px;line-height:10px;white-space:nowrap;will-change:transform;-webkit-text-stroke:0.2px currentColor;color:#8c8c8c;-webkit-text-stroke:0">&gt;</div>
<div style="position:absolute;left:548.5px;top:389.8px;width:18.0px;height:19.5px;background:#d6d6d6;border-top:1px solid #fff;border-left:1px solid #fff;border-right:1.5px solid #303030;border-bottom:1.5px solid #303030"></div>
<div style="position:absolute;left:548.5px;width:18.0px;text-align:center;top:394.0px;font-size:9px;line-height:10px;white-space:nowrap;will-change:transform;-webkit-text-stroke:0.2px currentColor;color:#8c8c8c;-webkit-text-stroke:0">&gt;&gt;</div>
</body></html>
